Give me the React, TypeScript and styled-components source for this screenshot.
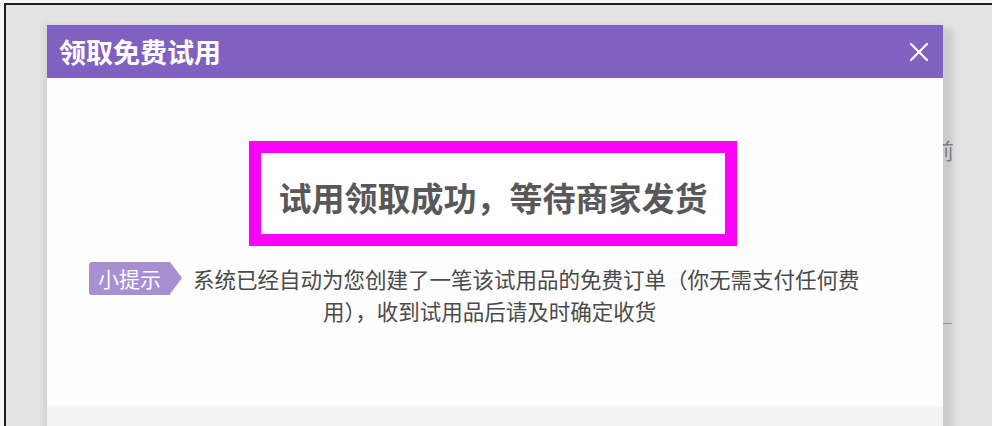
import React from "react";
import styled, { createGlobalStyle } from "styled-components";

const Global = createGlobalStyle`
  html, body { margin: 0; padding: 0; background: #f5f5f5; }
  #root { width: 992px; height: 426px; overflow: hidden; }
`;

const Page = styled.div`
  width: 992px;
  height: 426px;
  padding: 3px 0 0 4px;
  box-sizing: border-box;
  background: #f5f5f5;
  overflow: hidden;
`;

const Frame = styled.div`
  position: relative;
  height: 100%;
  border-top: 2px solid #1e1e1e;
  border-left: 2px solid #1e1e1e;
  background: #e3e3e3;
  padding: 20px 0 0 41px;
  box-sizing: border-box;
  overflow: hidden;
`;

const BgGlyph = styled.span`
  position: absolute;
  left: 926px;
  top: 128px;
  font: 22px "Noto Sans CJK SC", sans-serif;
  color: #8a8a8a;
`;

const BgRule = styled.span`
  position: absolute;
  left: 932px;
  top: 318px;
  width: 14px;
  height: 1px;
  background: #a8a8a8;
`;

const Dialog = styled.div`
  position: relative;
  z-index: 1;
  width: 896px;
  display: flex;
  flex-direction: column;
  box-shadow: 14px 0 6px -4px rgba(0, 0, 0, 0.1), -3px 0 6px rgba(0, 0, 0, 0.08);
`;

const Header = styled.div`
  height: 53px;
  background: #8061c1;
  display: flex;
  align-items: center;
  justify-content: space-between;
  padding: 0 14px 0 12px;
`;

const Title = styled.h1`
  margin: 0;
  font: 700 27px/1 "Noto Sans CJK SC", sans-serif;
  color: #ffffff;
`;

const CloseBtn = styled.button`
  border: 0;
  padding: 0;
  background: transparent;
  width: 20px;
  height: 20px;
  display: flex;
  cursor: pointer;
`;

const Body = styled.div`
  height: 328px;
  background: #fdfdfd;
  padding-top: 63px;
  box-sizing: border-box;
  display: flex;
  flex-direction: column;
`;

const Highlight = styled.div`
  width: 488px;
  height: 105px;
  box-sizing: border-box;
  margin: 0 0 0 202px;
  border: 12px solid #fc00fc;
  background: #ffffff;
  display: flex;
  align-items: center;
  justify-content: center;
  padding-top: 8px;
  font: 700 33px/1 "Noto Sans CJK SC", sans-serif;
  color: #58585a;
`;

const TipRow = styled.div`
  display: flex;
  align-items: flex-start;
  margin: 16px 0 0 42px;
  gap: 11px;
`;

const Badge = styled.div`
  position: relative;
  height: 33px;
  width: 81px;
  background: #a78fd1;
  border-radius: 3px 0 0 3px;
  display: flex;
  align-items: center;
  padding-left: 9px;
  box-sizing: border-box;
  font: 400 21px/1 "Noto Sans CJK SC", sans-serif;
  color: #ffffff;
  margin-right: 12px;
  &::after {
    content: "";
    position: absolute;
    right: -12px;
    top: 0;
    border-left: 12px solid #a78fd1;
    border-top: 16.5px solid transparent;
    border-bottom: 16.5px solid transparent;
  }
`;

const TipText = styled.div`
  display: flex;
  flex-direction: column;
  font: 400 21.5px/32px "Noto Sans CJK SC", sans-serif;
  color: #4a4a4a;
  margin-top: 1px;
`;

const Line = styled.span<{ $indent?: number }>`
  white-space: nowrap;
  padding-left: ${(p) => p.$indent ?? 0}px;
`;

const Footer = styled.div`
  height: 40px;
  background: #f2f2f3;
  border-top: 1px solid #f6f6f6;
`;

export default function App() {
  return (
    <>
      <Global />
      <Page>
        <Frame>
          <BgGlyph>前</BgGlyph>
          <BgRule />
          <Dialog>
            <Header>
              <Title>领取免费试用</Title>
              <CloseBtn aria-label="关闭">
                <svg width="20" height="20" viewBox="0 0 20 20">
                  <path d="M2 2 L18 18 M18 2 L2 18" stroke="#ffffff" strokeWidth="2.2" strokeLinecap="round" />
                </svg>
              </CloseBtn>
            </Header>
            <Body>
              <Highlight>试用领取成功，等待商家发货</Highlight>
              <TipRow>
                <Badge>小提示</Badge>
                <TipText>
                  <Line>系统已经自动为您创建了一笔该试用品的免费订单（你无需支付任何费</Line>
                  <Line $indent={130}>用），收到试用品后请及时确定收货</Line>
                </TipText>
              </TipRow>
            </Body>
            <Footer />
          </Dialog>
        </Frame>
      </Page>
    </>
  );
}
